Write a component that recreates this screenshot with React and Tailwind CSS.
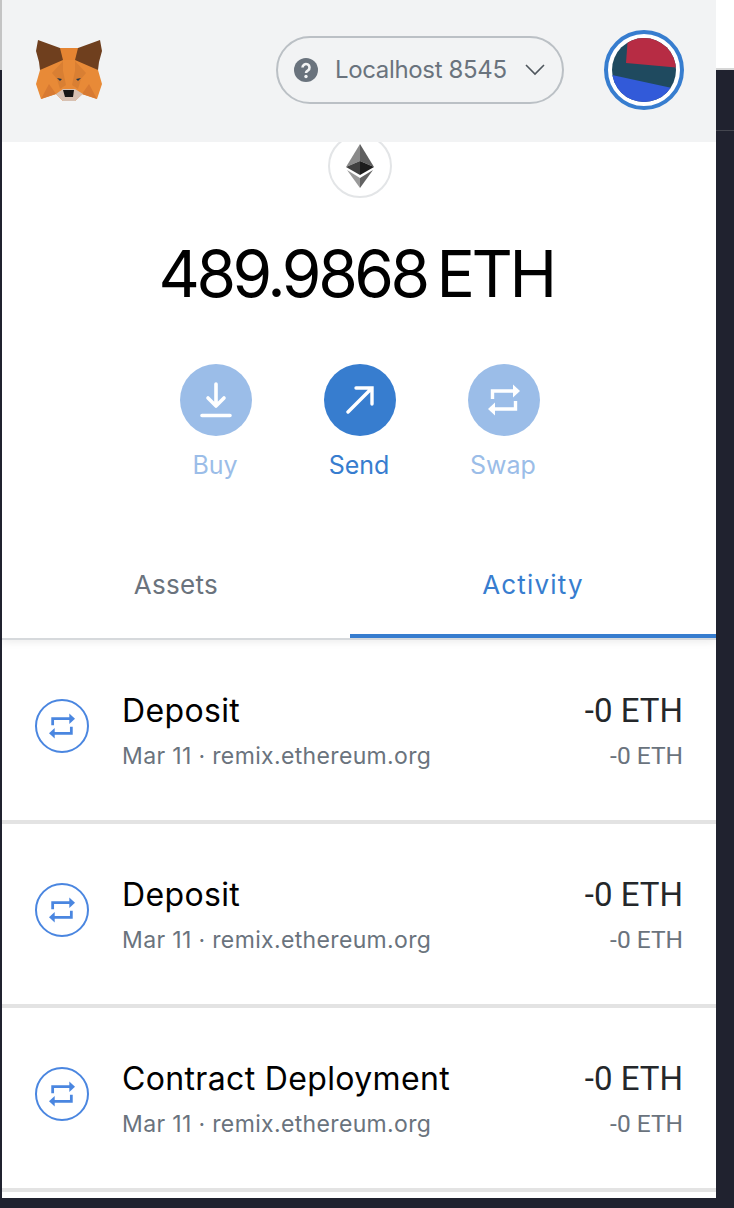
import React from "react";

const FONT = "font-['Inter','Noto_Sans',sans-serif]";

function Fox() {
  return (
    <svg viewBox="36 38 66 63" className="w-[66px] h-[63px] shrink-0">
      <polygon points="40,69 60,47 78,47 98,69 102,83 97,98 82,93 75,100 63,100 56,93 41,98 36,83" fill="#e88a37" />
      <polygon points="60,47 78,47 75,59 63,59" fill="#e58432" />
      <polygon points="38,39 60,47 63,59 40,69 39,61 36,50" fill="#6f3f1e" />
      <polygon points="100,39 78,47 75,59 98,69 99,61 102,50" fill="#6f3f1e" />
      <polygon points="52,72 63,60 63,70 66,84 60,88 57,78" fill="#d97f33" />
      <polygon points="86,72 75,60 75,70 72,84 78,88 81,78" fill="#d97f33" />
      <polygon points="49,83 56,93 41,98" fill="#d87a32" />
      <polygon points="89,83 82,93 97,98" fill="#d87a32" />
      <polygon points="56,93 63,88 75,88 83,93 75,100 63,100" fill="#d7c1b3" />
      <polygon points="63,89 74,89 73,96 65,96" fill="#161616" />
      <polygon points="57,77 62,78 60,80" fill="#233447" />
      <polygon points="81,77 76,78 78,80" fill="#233447" />
    </svg>
  );
}

function EthLogo() {
  return (
    <svg viewBox="0 0 28 44" className="w-[28px] h-[44px]">
      <polygon points="14,0 0,23 14,17" fill="#8a8a8a" />
      <polygon points="14,0 28,23 14,17" fill="#5f5f5f" />
      <polygon points="0,23 14,17 14,31" fill="#404040" />
      <polygon points="28,23 14,17 14,31" fill="#1c1c1c" />
      <polygon points="1,26 14,34 14,44" fill="#9a9a9a" />
      <polygon points="27,26 14,34 14,44" fill="#626262" />
    </svg>
  );
}

function Avatar() {
  return (
    <svg viewBox="0 0 64 64" className="w-[64px] h-[64px]">
      <clipPath id="av">
        <circle cx="32" cy="32" r="32" />
      </clipPath>
      <g clipPath="url(#av)">
        <rect width="64" height="64" fill="#1f4a5f" />
        <polygon points="16,-2 70,-2 70,30 14,25" fill="#b72c44" />
        <polygon points="-4,36 60,50 70,50 70,70 -4,70" fill="#325ad9" />
      </g>
    </svg>
  );
}

function SwapIcon({ className }) {
  return (
    <svg viewBox="0 0 32 32" fill="none" className={className}>
      <path d="M4.500 15V7h22" stroke="currentColor" strokeWidth="3.400" />
      <path d="M25 .5l7 6.500-7 6.500z" fill="currentColor" />
      <path d="M27.500 17v8H6" stroke="currentColor" strokeWidth="3.400" />
      <path d="M7 18.500L0 25l7 6.500z" fill="currentColor" />
    </svg>
  );
}

function ActionButton({ label, active, children }) {
  return (
    <div className="w-[72px] flex flex-col items-center">
      <div
        className={`w-[72px] h-[72px] rounded-full flex items-center justify-center text-white ${
          active ? "bg-[#377dcf]" : "bg-[#9bbde8]"
        }`}
      >
        {children}
      </div>
      <div
        className={`mt-[11px] text-[25px] leading-[36px] -translate-x-[1px] ${
          active ? "text-[#377dcf]" : "text-[#9bbde8]"
        }`}
      >
        {label}
      </div>
    </div>
  );
}

function ActivityRow({ title }) {
  return (
    <div className="h-[184px] shrink-0 border-b-4 border-[#e3e3e3] pl-[33px] pr-[33px] flex items-center bg-white">
      <div className="w-[54px] h-[54px] mb-[8px] rounded-full border-2 border-[#4a86e0] flex items-center justify-center text-[#4a86e0] shrink-0">
        <SwapIcon className="w-[26px] h-[26px]" />
      </div>
      <div className="ml-[33px] pt-[2px] flex-1 min-w-0">
        <div className="text-[32px] leading-[44px] tracking-[0.35px] text-black">{title}</div>
        <div className="mt-[6px] text-[23px] leading-[34px] tracking-[0.35px] text-[#6a737d] whitespace-nowrap">
          Mar 11 · remix.ethereum.org
        </div>
      </div>
      <div className="pt-[2px] text-right font-['Roboto',sans-serif] shrink-0">
        <div className="text-[33px] leading-[44px] text-[#24272a]">-0 ETH</div>
        <div className="mt-[6px] text-[24.500px] leading-[34px] text-[#6a737d]">-0 ETH</div>
      </div>
    </div>
  );
}

export default function App() {
  return (
    <div className={`relative w-[734px] h-[1208px] overflow-hidden bg-[#20222f] ${FONT}`}>
      <div className="absolute inset-x-0 top-0 h-[70px] bg-white border-b-2 border-[#d6d6d6]" />
      <div className="absolute left-0 top-0 w-[2px] h-[70px] bg-[#c4c4c4]" />
      <div className="absolute right-0 top-[130px] w-[18px] h-[1px] bg-[#44464f]" />

      <div className="relative ml-[2px] w-[714px] h-[1198px] bg-white flex flex-col overflow-hidden">
        <header className="h-[142px] shrink-0 bg-[#f2f3f4] flex items-center pl-[34px] pr-[32px] pb-[2px] z-10">
          <Fox />
          <div className="ml-auto h-[68px] w-[288px] rounded-full border-2 border-[#bbc0c5] flex items-center pl-[16px] pr-[17px]">
            <svg viewBox="0 0 24 24" className="w-[24px] h-[24px] shrink-0">
              <circle cx="12" cy="12" r="12" fill="#6a737d" />
              <path d="M8.500 9.500a3.500 3.500 0 1 1 5.500 2.900c-1.300.8-2 1.300-2 2.600" fill="none" stroke="#f2f3f4" strokeWidth="2.600" />
              <circle cx="12" cy="18.500" r="1.700" fill="#f2f3f4" />
            </svg>
            <span className="ml-[17px] text-[24px] leading-none tracking-[-0.35px] text-[#6a737d] whitespace-nowrap">Localhost 8545</span>
            <svg viewBox="0 0 20 12" className="ml-auto w-[20px] h-[12px]" fill="none">
              <path d="M1 1l9 9 9-9" stroke="#4f565d" strokeWidth="1.600" />
            </svg>
          </div>
          <div className="ml-[40px] w-[80px] h-[80px] rounded-full border-4 border-[#377dcf] flex items-center justify-center bg-white">
            <Avatar />
          </div>
        </header>

        <div className="h-[498px] shrink-0 flex flex-col items-center border-b-2 border-[#d6d9dc] pl-[2px] shadow-[0_2px_8px_rgba(0,0,0,0.08)] z-[5]">
          <div className="-mt-[8px] w-[64px] h-[64px] rounded-full border-2 border-[#e3e5e7] flex items-center justify-center">
            <EthLogo />
          </div>
          <div className="mt-[36px] mr-[8px] text-[64px] leading-[80px] tracking-[-3.400px] [word-spacing:-5px] text-black whitespace-nowrap">489.9868 ETH</div>
          <div className="mt-[50px] flex gap-[72px]">
            <ActionButton label="Buy">
              <svg viewBox="0 0 32 36" fill="none" className="w-[32px] h-[36px]" stroke="currentColor" strokeWidth="3.600" strokeLinecap="round" strokeLinejoin="round">
                <path d="M16 2v21M8 16l8 8 8-8M2 33.500h28" />
              </svg>
            </ActionButton>
            <ActionButton label="Send" active>
              <svg viewBox="0 0 28 28" fill="none" className="w-[28px] h-[28px]" stroke="currentColor" strokeWidth="3.400" strokeLinecap="round">
                <path d="M2 26L26 2M10 2h16v16" />
              </svg>
            </ActionButton>
            <ActionButton label="Swap">
              <SwapIcon className="w-[32px] h-[32px]" />
            </ActionButton>
          </div>
          <div className="mt-auto -ml-[2px] w-[714px] flex h-[104px] text-[26px]">
            <div className="w-[348px] flex items-center justify-center text-[#6a737d] tracking-[0.3px] pb-[4px]">Assets</div>
            <div className="flex-1 flex items-center justify-center text-[#377dcf] tracking-[1.200px] border-b-4 border-[#377dcf]">Activity</div>
          </div>
        </div>

        <ActivityRow title="Deposit" />
        <ActivityRow title="Deposit" />
        <ActivityRow title="Contract Deployment" />
      </div>
    </div>
  );
}
